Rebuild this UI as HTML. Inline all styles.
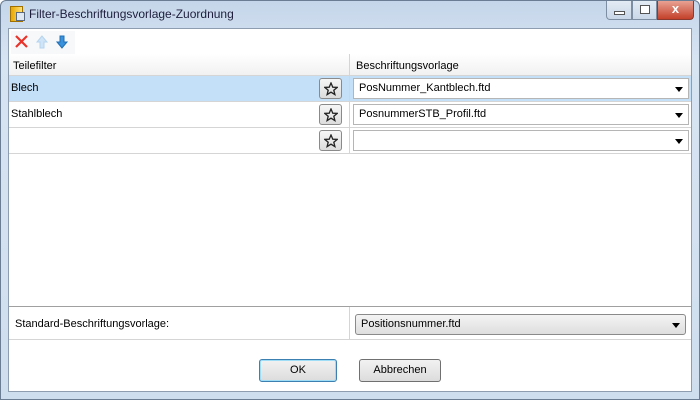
<!DOCTYPE html>
<html><head><style>
*{margin:0;padding:0;box-sizing:border-box}
body{width:700px;height:400px;overflow:hidden;font-family:"Liberation Sans","DejaVu Sans",sans-serif;font-size:11px;color:#000;background:#fff}
.frame{position:absolute;left:0;top:0;width:700px;height:400px;background:linear-gradient(#c5d6ea,#d7e4f2 60px,#cfdeee);border:1px solid #6b7d93;border-radius:6px 6px 0 0}
.title{position:absolute;left:28px;top:6px;font-size:12px;color:#1e1e3c}
.client{position:absolute;left:8px;top:28px;width:684px;height:364px;background:#fff;border:1px solid #8e9db0}
.abs{position:absolute}
.row{position:absolute;left:0;width:682px;height:26px;border-bottom:1px solid #d5d5d5}
.star{position:absolute;left:310px;top:2px;width:23px;height:21px;border:1px solid #8a8a8a;border-radius:3px;background:linear-gradient(#f6f6f6,#dcdcdc)}
.star svg{position:absolute;left:4px;top:3px}
.combo{position:absolute;left:344px;top:2px;width:336px;height:21px;border:1px solid #b5b5b5;background:#fff;padding:3px 5px;font-size:11px}
.combo:after{content:"";position:absolute;right:5px;top:8px;border-left:4px solid transparent;border-right:4px solid transparent;border-top:5px solid #000}
.btn{position:absolute;height:23px;border:1px solid #707070;border-radius:3px;background:linear-gradient(#f2f2f2,#dcdcdc);text-align:center;line-height:21px;font-size:11px}
</style></head><body>
<div class="frame">
<div class="abs" style="left:9px;top:5px;width:13px;height:16px;background:linear-gradient(90deg,#e8a800,#ffe27a);border:1px solid #a07000"></div>
<div class="abs" style="left:15px;top:11px;width:9px;height:9px;background:#dfe7f0;border:1px solid #5a6a80"></div>
<div class="title">Filter-Beschriftungsvorlage-Zuordnung</div>
<div class="abs" style="left:605px;top:0;width:26px;height:19px;border:1px solid #7d8ea3;border-top:none;border-radius:0 0 0 4px;background:linear-gradient(#e3ebf4,#c9d7e8)"><div class="abs" style="left:7px;top:10px;width:11px;height:4px;border:1px solid #555;background:#fff"></div></div>
<div class="abs" style="left:631px;top:0;width:25px;height:19px;border:1px solid #7d8ea3;border-top:none;background:linear-gradient(#e3ebf4,#c9d7e8)"><div class="abs" style="left:7px;top:4px;width:10px;height:9px;border:1px solid #555;background:#fff"></div></div>
<div class="abs" style="left:656px;top:0;width:37px;height:19px;border:1px solid #8a3a2e;border-top:none;border-radius:0 0 4px 0;background:linear-gradient(#e8a293,#c4402a);color:#fff;font-weight:bold;text-align:center;font-size:13px;line-height:16px">x</div>
</div>
<div class="client">
<div class="abs" style="left:2px;top:2px;width:64px;height:24px;background:#f7f8fa"></div>
<svg class="abs" style="left:5px;top:5px" width="60" height="16"><path d="M2 2 L13 13 M13 2 L2 13" stroke="#e8322a" stroke-width="2.2"/><path d="M28 2 L23 8 H26 V14 H30 V8 H33 Z" fill="#cfe4f7" stroke="#b5d4ef"/><path d="M48 14 L43 8 H46 V2 H50 V8 H53 Z" fill="#3a92dc" stroke="#1f6fb5"/></svg>
<div class="abs" style="left:0;top:25px;width:682px;height:22px;background:linear-gradient(#fff,#f1f1f1);border-bottom:1px solid #d5d5d5"></div>
<div class="abs" style="left:340px;top:25px;width:1px;height:100px;background:#d5d5d5"></div>
<div class="abs" style="left:4px;top:31px">Teilefilter</div>
<div class="abs" style="left:347px;top:31px">Beschriftungsvorlage</div>
<div class="row" style="top:47px"><div class="abs" style="left:0;top:0;width:340px;height:25px;background:#c4dff8"></div><div class="abs" style="left:341px;top:0;width:341px;height:25px;background:#c4dff8"></div><div class="abs" style="left:2px;top:6px">Blech</div><div class="star"><svg width="14" height="14"><path d="M7 1 L8.8 5.2 L13.2 5.4 L9.8 8.2 L10.9 12.6 L7 10.2 L3.1 12.6 L4.2 8.2 L0.8 5.4 L5.2 5.2 Z" fill="none" stroke="#222" stroke-width="1.3"/></svg></div><div class="combo">PosNummer_Kantblech.ftd</div></div>
<div class="row" style="top:73px"><div class="abs" style="left:2px;top:6px">Stahlblech</div><div class="star"><svg width="14" height="14"><path d="M7 1 L8.8 5.2 L13.2 5.4 L9.8 8.2 L10.9 12.6 L7 10.2 L3.1 12.6 L4.2 8.2 L0.8 5.4 L5.2 5.2 Z" fill="none" stroke="#222" stroke-width="1.3"/></svg></div><div class="combo">PosnummerSTB_Profil.ftd</div></div>
<div class="row" style="top:99px"><div class="star"><svg width="14" height="14"><path d="M7 1 L8.8 5.2 L13.2 5.4 L9.8 8.2 L10.9 12.6 L7 10.2 L3.1 12.6 L4.2 8.2 L0.8 5.4 L5.2 5.2 Z" fill="none" stroke="#222" stroke-width="1.3"/></svg></div><div class="combo"></div></div>
<div class="abs" style="left:0;top:277px;width:682px;height:1px;background:#a0a0a0"></div>
<div class="abs" style="left:0;top:310px;width:682px;height:1px;background:#d5d5d5"></div>
<div class="abs" style="left:340px;top:278px;width:1px;height:32px;background:#d5d5d5"></div>
<div class="abs" style="left:6px;top:289px">Standard-Beschriftungsvorlage:</div>
<div class="combo" style="top:285px;left:346px;width:331px;border-color:#8a8a8a;border-radius:3px;background:linear-gradient(#f4f4f4,#dedede)">Positionsnummer.ftd</div>
<div class="btn" style="left:250px;top:330px;width:78px;border-color:#3c7fb1;box-shadow:inset 0 0 0 1px #9fdcf5">OK</div>
<div class="btn" style="left:350px;top:330px;width:82px">Abbrechen</div>
</div>
</body></html>
